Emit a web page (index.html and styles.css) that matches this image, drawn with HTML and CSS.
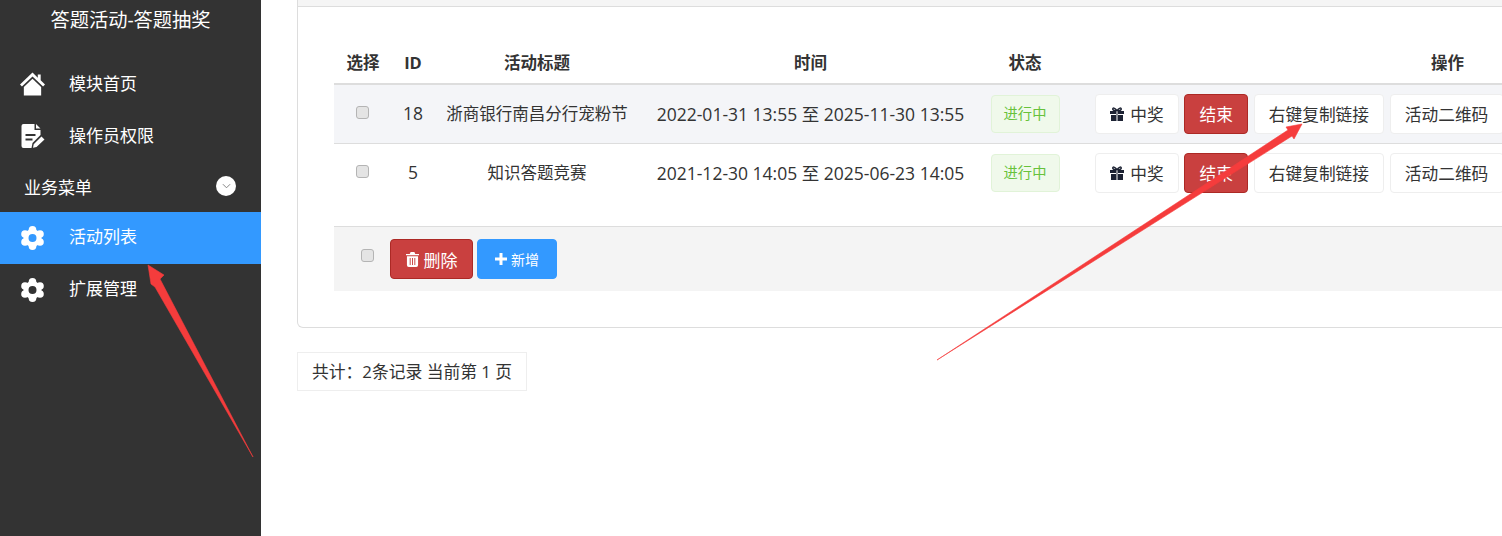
FILE: index.html
```html
<!DOCTYPE html>
<html lang="zh">
<head>
<meta charset="utf-8">
<title>答题活动-答题抽奖</title>
<link rel="stylesheet" href="styles.css">
</head>
<body>
<div class="app">
  <aside class="sidebar">
    <div class="brand">答题活动-答题抽奖</div>
    <nav class="nav">
      <a class="nav-item top">
        <svg class="nav-icon" viewBox="0 0 26 24"><path fill="#fff" d="M13 0 0 12.500 2 14.500 13 4.200 24 14.500 26 12.500 21.500 8.200V2h-3v3.500z"/><path fill="#fff" d="M13 6.500 4 15v9h18v-9z"/></svg>
        <span>模块首页</span>
      </a>
      <a class="nav-item top">
        <svg class="nav-icon" viewBox="0 0 24 24"><path fill="#fff" fill-rule="evenodd" d="M3 0h11v6h6v5l-8 8-1 5H3a2 2 0 0 1-2-2V2a2 2 0 0 1 2-2zm2 10v2h10v-2zm0 4.500v2h7v-2z"/><path fill="#fff" d="M15.500 0 20 4.500h-4.500zM21 12.500l3 3L16 23l-3.500.8.700-3.500z"/></svg>
        <span>操作员权限</span>
      </a>
      <div class="nav-group">
        <span>业务菜单</span>
        <span class="chev"><svg viewBox="0 0 10 6" width="9" height="6"><path d="M1 1l4 4 4-4" fill="none" stroke="#777" stroke-width="1"/></svg></span>
      </div>
      <a class="nav-item sub active">
        <svg class="nav-icon" viewBox="0 0 24 24"><g fill="#fff"><circle cx="12" cy="3.800" r="3.800"/><circle cx="12" cy="20.200" r="3.800"/><circle cx="4.500" cy="8" r="3.800"/><circle cx="19.500" cy="8" r="3.800"/><circle cx="4.500" cy="16" r="3.800"/><circle cx="19.500" cy="16" r="3.800"/></g><circle cx="12" cy="12" r="6.500" fill="none" stroke="#fff" stroke-width="5"/></svg>
        <span>活动列表</span>
      </a>
      <a class="nav-item sub">
        <svg class="nav-icon" viewBox="0 0 24 24"><g fill="#fff"><circle cx="12" cy="3.800" r="3.800"/><circle cx="12" cy="20.200" r="3.800"/><circle cx="4.500" cy="8" r="3.800"/><circle cx="19.500" cy="8" r="3.800"/><circle cx="4.500" cy="16" r="3.800"/><circle cx="19.500" cy="16" r="3.800"/></g><circle cx="12" cy="12" r="6.500" fill="none" stroke="#fff" stroke-width="5"/></svg>
        <span>扩展管理</span>
      </a>
    </nav>
  </aside>
  <main class="main">
    <section class="panel">
      <div class="panel-head"></div>
      <table class="grid">
        <colgroup>
          <col class="c-check"><col class="c-id"><col class="c-title"><col class="c-time"><col class="c-status"><col class="c-ops">
        </colgroup>
        <thead>
          <tr><th>选择</th><th>ID</th><th>活动标题</th><th>时间</th><th>状态</th><th>操作</th></tr>
        </thead>
        <tbody>
          <tr class="hover">
            <td><span class="check"></span></td>
            <td class="txt num">18</td>
            <td class="txt">浙商银行南昌分行宠粉节</td>
            <td class="txt time">2022-01-31 13:55 至 2025-11-30 13:55</td>
            <td><span class="tag">进行中</span></td>
            <td class="ops">
              <a class="btn"><svg class="gift" viewBox="0 0 14 14"><path fill="#1c2233" d="M0 4h6v3H0zM8 4h6v3H8zM1 8h5v6H1zM8 8h5v6H8zM6.500 4h1v10h-1z"/><path fill="none" stroke="#1c2233" stroke-width="1.500" d="M7 3.600C5 .5 2.500.5 2.800 2.300 3 3.600 5 3.600 7 3.600zM7 3.600c2-3.100 4.500-3.100 4.200-1.300C11 3.600 9 3.600 7 3.600z"/></svg>中奖</a>
              <a class="btn danger">结束</a>
              <a class="btn">右键复制链接</a>
              <a class="btn">活动二维码</a>
            </td>
          </tr>
          <tr>
            <td><span class="check"></span></td>
            <td class="txt num">5</td>
            <td class="txt">知识答题竞赛</td>
            <td class="txt time">2021-12-30 14:05 至 2025-06-23 14:05</td>
            <td><span class="tag">进行中</span></td>
            <td class="ops">
              <a class="btn"><svg class="gift" viewBox="0 0 14 14"><path fill="#1c2233" d="M0 4h6v3H0zM8 4h6v3H8zM1 8h5v6H1zM8 8h5v6H8zM6.500 4h1v10h-1z"/><path fill="none" stroke="#1c2233" stroke-width="1.500" d="M7 3.600C5 .5 2.500.5 2.800 2.300 3 3.600 5 3.600 7 3.600zM7 3.600c2-3.100 4.500-3.100 4.200-1.300C11 3.600 9 3.600 7 3.600z"/></svg>中奖</a>
              <a class="btn danger">结束</a>
              <a class="btn">右键复制链接</a>
              <a class="btn">活动二维码</a>
            </td>
          </tr>
        </tbody>
      </table>
      <div class="toolbar">
        <span class="check"></span>
        <a class="btn danger wide"><svg class="trash" viewBox="0 0 14 16"><path fill="#fff" fill-rule="evenodd" d="M5 0h4l1 2h4v1.500H0V2h4zM1 4.500h12V14a2 2 0 0 1-2 2H3a2 2 0 0 1-2-2zM4 6.500V14h1V6.500zM6.500 6.500V14h1V6.500zM9 6.500V14h1V6.500z"/></svg>删除</a>
        <a class="btn primary"><svg class="plus" viewBox="0 0 12 12"><path fill="#fff" d="M4.500 0h3v4.500H12v3H7.500V12h-3V7.500H0v-3h4.500z"/></svg>新增</a>
      </div>
    </section>
    <div class="pager">共计：2条记录 当前第 1 页</div>
  </main>
</div>
<svg class="mark" width="1502" height="536" viewBox="0 0 1502 536">
  <path fill="#f53c3c" stroke="#f53c3c" stroke-width=".6" d="M253 457 155 287 151 284 148 265 164 275 160 279z"/>
  <path fill="#f53c3c" stroke="#f53c3c" stroke-width=".6" d="M937 360 1288 130 1286 127 1302 124 1294 139 1292 136z"/>
</svg>
</body>
</html>
```
FILE: styles.css
```css
html, body {
  margin: 0;
  height: 100%;
  overflow: hidden;
  background: #fff;
}
body {
  font-family: "Open Sans", "Noto Sans CJK SC", sans-serif;
  font-size: 16.500px;
  color: #333;
}
.app {
  display: flex;
  height: 536px;
  width: 1502px;
  overflow: hidden;
}
.sidebar {
  flex: 0 0 261px;
  background: #333;
  color: #fff;
}
.brand {
  height: 40px;
  line-height: 40px;
  text-align: center;
  font-size: 19.250px;
}
.nav {
  padding-top: 16px;
}
.nav-item, .nav-group {
  display: flex;
  align-items: center;
  box-sizing: border-box;
  height: 52px;
  color: #fff;
  font-size: 17px;
}
.nav-item {
  padding-left: 20px;
  gap: 24px;
}
.nav-item span {
  padding-bottom: 3px;
}
.nav-item.top {
  padding-top: 4px;
}
.nav-item.sub span {
  padding-bottom: 5px;
}
.nav-item.active {
  background: #3399ff;
}
.nav-group {
  justify-content: space-between;
  padding: 0 25px 0 24px;
}
.chev {
  width: 20px;
  height: 20px;
  border-radius: 50%;
  background: #fff;
  display: flex;
  align-items: center;
  justify-content: center;
}
.nav-icon {
  width: 25px;
  height: 24px;
  flex: none;
}
.main {
  flex: none;
  width: 1600px;
  padding-left: 36px;
}
.panel {
  box-sizing: border-box;
  height: 328px;
  padding: 0 36px;
  border: 1px solid #ddd;
  border-top: 0;
  border-radius: 0 0 6px 6px;
}
.panel-head {
  height: 6px;
  margin: 0 -36px 36px;
  background: #f5f5f5;
  border-bottom: 1px solid #ddd;
}
.grid {
  table-layout: fixed;
  border-collapse: collapse;
  width: 1492px;
}
.c-check { width: 58px; }
.c-id { width: 42px; }
.c-title { width: 206px; }
.c-time { width: 341px; }
.c-status { width: 88px; }
.c-ops { width: 757px; }
.grid th {
  height: 41px;
  padding: 0 0 2px;
  box-sizing: border-box;
  font-weight: 700;
  border-bottom: 2px solid #ddd;
}
.grid td {
  height: 58px;
  padding: 0;
  text-align: center;
}
.grid td.txt {
  box-sizing: border-box;
  padding-bottom: 2px;
}
.grid td.time,
.grid td.num {
  font-size: 17.500px;
}
.grid tbody tr:first-child td {
  border-bottom: 1px solid #ddd;
}
.grid tr.hover td {
  background: #f4f5f8;
}
.grid td.ops {
  text-align: left;
  padding-left: 26px;
  white-space: nowrap;
}
.ops .btn {
  margin-right: 1px;
}
.check {
  display: inline-block;
  box-sizing: border-box;
  width: 13px;
  height: 13px;
  border: 1px solid #b4b4b4;
  border-radius: 3px;
  background: #e4e4e4;
  position: relative;
  top: -2px;
  margin-right: 2px;
}
.tag {
  display: inline-block;
  box-sizing: border-box;
  height: 38px;
  line-height: 36px;
  width: 69px;
  border: 1px solid #e1f3d8;
  border-radius: 4px;
  background: #f0f9eb;
  color: #67c23a;
  font-size: 14.300px;
}
.btn {
  display: inline-flex;
  align-items: center;
  justify-content: center;
  box-sizing: border-box;
  height: 40px;
  padding: 0 14.300px;
  border: 1px solid #eee;
  border-radius: 4px;
  background: #fff;
  color: #333;
  font-size: 16.700px;
  vertical-align: middle;
}
.btn.danger {
  background: #c9403f;
  border-color: #ac2925;
  color: #fff;
}
.btn.primary {
  background: #3399ff;
  border-color: #3399ff;
  color: #fff;
  font-size: 14px;
  width: 80px;
  padding: 0;
}
.btn.wide {
  width: 83px;
  padding: 0;
  font-size: 17px;
}
.gift {
  width: 14px;
  height: 14px;
  margin-right: 6px;
}
.trash {
  width: 13px;
  height: 15px;
  margin-right: 5px;
}
.plus {
  width: 12px;
  height: 12px;
  margin-right: 4px;
}
.toolbar {
  display: flex;
  align-items: center;
  margin-top: 24px;
  height: 65px;
  border-top: 1px solid #ddd;
  background: #f4f4f4;
  width: 1492px;
  box-sizing: border-box;
  padding-left: 27px;
}
.toolbar .check {
  margin-right: 16px;
  top: -4px;
}
.toolbar .btn {
  margin-right: 4px;
}
.pager {
  display: inline-block;
  margin-top: 24px;
  box-sizing: border-box;
  height: 39px;
  line-height: 37px;
  padding: 0 14px;
  border: 1px solid #eee;
  font-size: 16.800px;
}
.mark {
  position: absolute;
  left: 0;
  top: 0;
  pointer-events: none;
}
```
